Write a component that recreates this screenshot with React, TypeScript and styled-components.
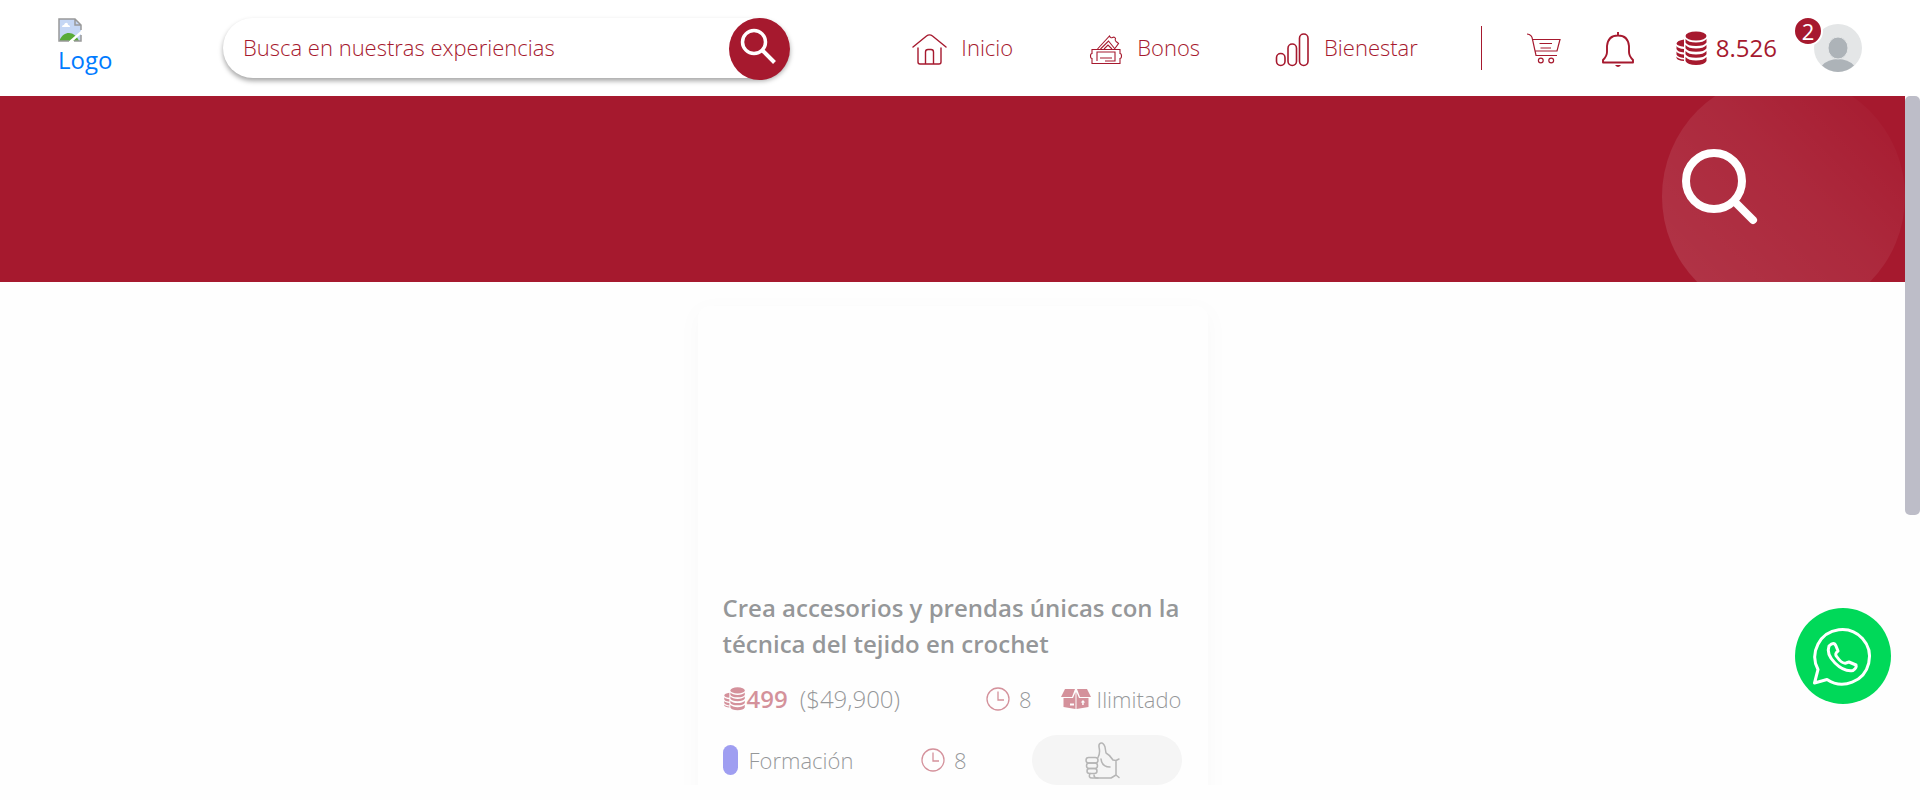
import React from 'react';
import styled, { createGlobalStyle } from 'styled-components';

const red = '#a6192e';

const GlobalStyle = createGlobalStyle`
  *, *::before, *::after { box-sizing: border-box; }
  body {
    margin: 0;
    overflow: hidden;
    background: #fefefe;
    color: #212529;
    font-family: 'Open Sans', 'Noto Sans', sans-serif;
    font-size: 24px;
    line-height: 36px;
  }
  a { text-decoration: none; }
  button { border: 0; padding: 0; background: none; font: inherit; color: inherit; cursor: pointer; }
  svg { display: block; flex: none; }
`;

const Header = styled.header`
  display: flex;
  align-items: center;
  height: 96px;
  padding: 0 58px;
  background: #fff;
  color: ${red};
`;

const Logo = styled.a`
  flex: none;
  width: 165px;
  color: #007bff;
  line-height: 36px;
`;

const Search = styled.form`
  display: flex;
  align-items: flex-start;
  flex: 0 1 567px;
  min-width: 240px;
  height: 60px;
  border-radius: 30px;
  background: #fff;
  box-shadow: 0 3px 5px rgba(0, 0, 0, 0.35);
`;

const SearchInput = styled.input`
  flex: 1;
  min-width: 0;
  height: 60px;
  border: 0;
  outline: 0;
  padding: 0 20px 2px;
  background: none;
  font-family: inherit;
  font-size: 22px;
  font-weight: 300;
  color: ${red};
  &::placeholder { color: ${red}; opacity: 1; }
`;

const SearchButton = styled.button`
  flex: none;
  width: 61px;
  height: 62px;
  border-radius: 50%;
  background: ${red};
  color: #fff;
`;

const Nav = styled.nav`
  display: flex;
  align-items: center;
  gap: 75px;
  margin-left: auto;
`;

const NavLink = styled.a`
  display: flex;
  align-items: center;
  gap: 14px;
  padding-bottom: 2px;
  color: ${red};
  font-size: 22px;
  font-weight: 300;
  svg { margin-top: 5px; }
`;

const Tools = styled.div`
  display: flex;
  align-items: center;
  height: 44px;
  margin-left: 63px;
  padding-left: 44px;
  border-left: 1px solid ${red};
`;

const ToolButton = styled.button`
  width: 36px;
  height: 38px;
  margin-right: 39px;
`;

const Points = styled.a`
  display: flex;
  align-items: center;
  gap: 9px;
  color: ${red};
  font-weight: 500;
`;

const Profile = styled.button`
  position: relative;
  width: 48px;
  height: 48px;
  margin-left: 37px;
`;

const Badge = styled.span`
  position: absolute;
  top: -8px;
  left: -21px;
  width: 30px;
  height: 30px;
  border: 2px solid #fff;
  border-radius: 50%;
  background: ${red};
  color: #fff;
  font-size: 22px;
  line-height: 26px;
  text-align: center;
`;

const Viewport = styled.div`
  display: flex;
  align-items: flex-start;
  height: calc(100vh - 96px);
`;

const Content = styled.main`
  flex: 1;
  min-width: 0;
  height: calc(100% - 15px);
  overflow: hidden;
`;

const ScrollThumb = styled.div`
  flex: none;
  width: 15px;
  height: 419px;
  border-radius: 5px;
  background: #bdbdc8;
`;

const Banner = styled.section`
  display: flex;
  justify-content: flex-end;
  align-items: center;
  height: 186px;
  overflow: hidden;
  background: ${red};
`;

const BannerDisc = styled.div`
  flex: none;
  display: flex;
  align-items: center;
  width: 243px;
  height: 243px;
  margin-top: 14px;
  padding-left: 20px;
  border-radius: 50%;
  background: linear-gradient(45deg, rgba(255, 255, 255, 0.13), rgba(255, 255, 255, 0.07) 55%, rgba(255, 255, 255, 0));
`;

const BannerIcon = styled.svg`
  margin-bottom: 18px;
`;

const Card = styled.article`
  width: 510px;
  margin: 24px auto 0;
  padding: 0 26px 24px 25px;
  border-radius: 12px;
  background: #fff;
  box-shadow: 0 6px 20px rgba(0, 0, 0, 0.05);
  opacity: 0.47;
`;

const CardMedia = styled.div`
  height: 284px;
`;

const CardTitle = styled.h2`
  margin: 0 0 19px;
  font-size: 24px;
  line-height: 36px;
  font-weight: 600;
`;

const CardRow = styled.div`
  display: flex;
  align-items: center;
  margin-bottom: 18px;
`;

const Price = styled.strong`
  display: flex;
  align-items: center;
  gap: 1px;
  margin-right: 12px;
  font-weight: 600;
  color: ${red};
`;

const Amount = styled.span`
  font-weight: 300;
`;

const Meta = styled.span<{ $gap: number; $push?: boolean }>`
  display: flex;
  align-items: center;
  gap: ${(p) => p.$gap}px;
  margin-left: ${(p) => (p.$push ? 'auto' : '0')};
  font-size: 22px;
  font-weight: 300;
  svg { color: ${red}; }
`;

const MetaGroup = styled.span`
  display: flex;
  align-items: center;
  gap: 29px;
  margin-left: auto;
`;

const Tag = styled.span`
  width: 15px;
  height: 30px;
  border-radius: 8px;
  background: #3633e4;
`;

const LikeButton = styled.button`
  display: flex;
  justify-content: center;
  align-items: center;
  width: 150px;
  height: 50px;
  margin-left: 65px;
  border-radius: 25px;
  background: #ececec;
  color: #666;
`;

const WhatsApp = styled.a`
  position: fixed;
  right: 29px;
  bottom: 96px;
  width: 96px;
  height: 96px;
  border-radius: 50%;
  background: #00d959;
`;

const BrokenImage = () => (
  <svg width="24" height="24" viewBox="0 0 24 24" role="img" aria-label="Logo">
    <path d="M1 1h16l6 6v16H1z" fill="#c5d7f5" />
    <path d="M1 23c3-6 6-8 10-8s8 3 10 8z" fill="#58ab38" />
    <path d="M4 9c0-2 2-2 2-2 1-3 4-3 4 0 2 0 2 2 2 2z" fill="#fff" />
    <path d="M24 12v3L14 24h-4z" fill="#fff" />
    <path d="M23 12V7l-6-6H1v22h10M17 1v6h6" fill="none" stroke="#999" strokeWidth="1.5" />
    <path d="M23 17v6h-7" fill="none" stroke="#999" strokeWidth="1.5" />
  </svg>
);

const HomeIcon = () => (
  <svg width="35" height="34" viewBox="0 0 35 34" fill="none" stroke="currentColor" strokeWidth="1.4" strokeLinecap="round">
    <path d="M1 14 14.500 3Q17.500.800 20.500 3L34 14M6 15v14q0 2 2 2h19q2 0 2-2V15M13.500 31V19q0-2.500 2.500-2.500h3q2.500 0 2.500 2.500v12" />
  </svg>
);

const TicketsIcon = () => (
  <svg width="35" height="34" viewBox="0 0 35 34" fill="none" stroke="currentColor" strokeWidth="1.1">
    <path d="M4 16.500h28v4c2 0 2 5 0 5v5H4v-5c-2 0-2-5 0-5zM9 28V19h18v9h-10M12 25h12" />
    <path d="M9.500 16 21.500 3q1 2.500 3 1.500t3 1q-1 2 .5 3t2.500 2l-4 5.500M12.500 16l8-8 6.500 8M16 16l4-4 4 4" />
  </svg>
);

const BarsIcon = () => (
  <svg width="35" height="34" viewBox="0 0 35 34" fill="none" stroke="currentColor" strokeWidth="1.6">
    <rect x="1.500" y="20.500" width="8.500" height="12" rx="4.200" />
    <rect x="13" y="11" width="8.500" height="21.500" rx="4.200" />
    <rect x="24.500" y="1" width="8.500" height="31.500" rx="4.200" />
  </svg>
);

const CartIcon = () => (
  <svg width="36" height="36" viewBox="0 0 36 36" fill="none" stroke="currentColor" strokeWidth="1.2">
    <path d="M1 4q5 .5 5.500 5.500L10 25.500h21M6.500 9.500H34l-3 11.500H9M13.500 13.500h12.500M14.500 18H25" />
    <circle cx="14.800" cy="30.500" r="2.400" />
    <circle cx="25.200" cy="30.500" r="2.400" />
  </svg>
);

const BellIcon = () => (
  <svg width="36" height="38" viewBox="0 0 36 38" fill="none" stroke="currentColor" strokeWidth="1.900">
    <path d="M17 3v3M2 33.500V31q4-4 4-8V17Q7 6.500 17 6.500T28 17v6q0 4 4 8v2.500z" strokeLinejoin="round" />
    <path d="M14 36h6q-3 4-6 0z" fill="currentColor" stroke="none" />
  </svg>
);

const CoinsIcon = ({ width = 31, height = 35 }: { width?: number; height?: number }) => (
  <svg width={width} height={height} viewBox="0 0 31 35" fill="currentColor">
    <ellipse cx="20" cy="5" rx="10.500" ry="4.500" />
    <path d="M9.500 8q3 3.500 10.500 3.500T30.500 8v3.500q-2 3.500-10.500 3.500T9.500 11.500zM9.500 14q3 3.500 10.500 3.500T30.500 14v3.300q-2 3.500-10.500 3.500T9.500 17.300zM9.500 20q3 3.500 10.500 3.500T30.500 20v3.200q-2 3.500-10.500 3.500T9.500 23.200zM9.500 26q3 3.500 10.500 3.500T30.500 26v4q-2 4-10.500 4T9.500 30z" />
    <path d="M8 8.500v7.200Q1 15 .5 12.500 1 9.500 8 8.500zM.5 15q1.500 2.500 7.500 3v3.500Q1.500 21 .5 18zM.5 20.500q1.500 2.500 7.500 3V27Q1.500 26 .5 23.500z" />
    <path d="M.5 25.500q1.500 2.500 7.500 3V30Q1.500 29.500.5 27z" />
  </svg>
);

const AvatarIcon = () => (
  <svg width="48" height="48" viewBox="0 0 48 48">
    <circle cx="24" cy="24" r="24" fill="#e4e6e7" />
    <path d="M8 41.500Q14 35 24 35t16 6.500Q33 48 24 48T8 41.500z" fill="#adb3b8" />
    <ellipse cx="24" cy="24" rx="10" ry="11" fill="#adb3b8" stroke="#e4e6e7" />
  </svg>
);

const ClockIcon = () => (
  <svg width="24" height="24" viewBox="0 0 24 24" fill="none" stroke="currentColor" strokeWidth="1.300">
    <circle cx="12" cy="12" r="11" />
    <path d="M12 4.500V13h6" />
  </svg>
);

const BoxIcon = () => (
  <svg width="30" height="20" viewBox="0 0 30 20" fill="currentColor">
    <path d="M4 0h10l-3 8H0zM26 0H16l3 8h11z" />
    <path fillRule="evenodd" d="M2.500 9H12l2.500-6v17l-12-2zM9 14.500v2h4v-2z" />
    <path fillRule="evenodd" d="M27.500 9H18l-2.500-6v17l12-2zM22 11l-2.300 2.500h1.500V16h1.500v-2.500h1.500z" />
  </svg>
);

const ThumbIcon = () => (
  <svg width="44" height="44" viewBox="0 -4 44 44" fill="none" stroke="currentColor" strokeWidth="1.500" strokeLinecap="round" strokeLinejoin="round">
    <path d="M13 15.500Q15.500 11 14 5q-.5-3.500 2-4t4 4l1 6q4 2 7 7l3 .5 3-1.500M31 18.500v14.500l3 2.500M31 33l-5 3H12q-3 0-3-3" />
    <rect x="1" y="15.500" width="12" height="5.500" rx="2.700" />
    <rect x="1.500" y="21" width="11" height="5.500" rx="2.700" />
    <rect x="2" y="26.500" width="10" height="5" rx="2.500" />
    <path d="M5 31.500q-2 4.500 2 4.500h6M16 17q1 8 9 8" />
  </svg>
);

export default function App() {
  return (
    <>
      <GlobalStyle />
      <Header>
        <Logo href="#">
          <BrokenImage />
          Logo
        </Logo>
        <Search onSubmit={(e) => e.preventDefault()}>
          <SearchInput type="text" aria-label="Buscar" placeholder="Busca en nuestras experiencias" />
          <SearchButton type="submit" aria-label="Buscar">
            <svg width="61" height="62" viewBox="0 0 61 62" fill="none" stroke="currentColor" strokeWidth="3.500">
              <circle cx="25" cy="24" r="11.500" />
              <path d="m33 32 12.500 12.500" strokeWidth="4" />
            </svg>
          </SearchButton>
        </Search>
        <Nav>
          <NavLink href="#"><HomeIcon />Inicio</NavLink>
          <NavLink href="#"><TicketsIcon />Bonos</NavLink>
          <NavLink href="#"><BarsIcon />Bienestar</NavLink>
        </Nav>
        <Tools>
          <ToolButton aria-label="Carrito"><CartIcon /></ToolButton>
          <ToolButton aria-label="Notificaciones"><BellIcon /></ToolButton>
          <Points href="#"><CoinsIcon />8.526</Points>
          <Profile aria-label="Perfil">
            <AvatarIcon />
            <Badge>2</Badge>
          </Profile>
        </Tools>
      </Header>
      <Viewport>
        <Content>
          <Banner>
            <BannerDisc>
              <BannerIcon width="76" height="78" viewBox="0 0 76 78" fill="none" stroke="#fff" strokeWidth="8" strokeLinecap="round">
                <circle cx="32" cy="33" r="28" />
                <path d="m53 54 18 18" />
              </BannerIcon>
            </BannerDisc>
          </Banner>
          <Card>
            <CardMedia />
            <CardTitle>Crea accesorios y prendas únicas con la técnica del tejido en crochet</CardTitle>
            <CardRow>
              <Price><CoinsIcon width={23} height={24} />499</Price>
              <Amount>($49,900)</Amount>
              <MetaGroup>
                <Meta $gap={9}><ClockIcon />8</Meta>
                <Meta $gap={6}><BoxIcon />Ilimitado</Meta>
              </MetaGroup>
            </CardRow>
            <CardRow>
              <Meta $gap={11}><Tag />Formación</Meta>
              <Meta $gap={9} $push><ClockIcon />8</Meta>
              <LikeButton aria-label="Me gusta"><ThumbIcon /></LikeButton>
            </CardRow>
          </Card>
        </Content>
        <ScrollThumb />
      </Viewport>
      <WhatsApp href="#" aria-label="WhatsApp">
        <svg width="96" height="96" viewBox="0 0 96 96" fill="none" stroke="#fff" strokeWidth="3" strokeLinejoin="round">
          <path d="M23 61.500A27.300 27.300 0 1 1 32 71.500L19.500 75z" />
          <path d="M34 38q5-5 7 0l2 5q-4 3-1 6 5 7 9 6l3-1 7 3q1 3-3 5.500Q49 64 40 55T34 38z" />
        </svg>
      </WhatsApp>
    </>
  );
}
